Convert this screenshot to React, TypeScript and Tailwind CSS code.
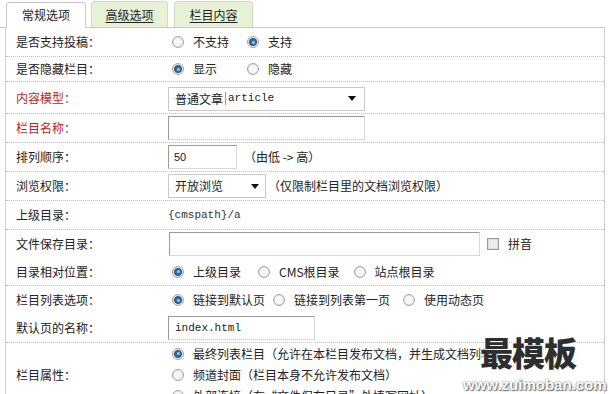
import React from "react";

function Radio({ on }: { on?: boolean }) {
  return (
    <span className="inline-flex items-center justify-center w-[12px] h-[12px] rounded-full border border-[#a8a8a8] bg-[#e4e4e4] shrink-0">
      {on ? (
        <span className="w-[8px] h-[8px] rounded-full bg-[#2f6fa8] border border-[#1d4f7e] flex items-center justify-center">
          <span className="w-[3px] h-[3px] rounded-full bg-[#9cc8ee]" />
        </span>
      ) : (
        <span className="w-[8px] h-[8px] rounded-full bg-[#f7f7f7]" />
      )}
    </span>
  );
}

function Opt({ on, label, gap }: { on?: boolean; label: string; gap?: string }) {
  return (
    <span className={`inline-flex items-center ${gap ?? ""}`}>
      <Radio on={on} />
      <span className="ml-[9px]">{label}</span>
    </span>
  );
}

function Arrow() {
  return (
    <svg width="8" height="5" viewBox="0 0 8 5" className="shrink-0">
      <path d="M0 0 H8 L4 5 Z" fill="#111" />
    </svg>
  );
}

const inputCls =
  "h-[24px] border border-t-[#9a9a9a] border-l-[#9a9a9a] border-r-[#d8d8d8] border-b-[#d8d8d8] bg-white";

export default function App() {
  return (
    <div className="w-[611px] h-[394px] bg-white relative overflow-hidden text-[12px] leading-none text-[#222] font-['Noto_Sans_CJK_SC',sans-serif]">
      {/* tabs */}
      <div className="h-[28px] flex items-end border-b border-[#c8c8c8] mr-[6px] pl-[6px]">
        <div className="w-[80px] h-[26px] -mb-px bg-white border border-[#c8c8c8] border-b-white rounded-t-[4px] flex items-center justify-center text-[#222]">
          常规选项
        </div>
        <div className="ml-[5px] w-[77px] h-[26px] bg-[#e6f1d6] border border-[#cfdcbf] border-b-0 rounded-t-[4px] flex items-center justify-center underline underline-offset-2 text-[#222]">
          高级选项
        </div>
        <div className="ml-[6px] w-[79px] h-[26px] bg-[#e6f1d6] border border-[#cfdcbf] border-b-0 rounded-t-[4px] flex items-center justify-center underline underline-offset-2 text-[#222]">
          栏目内容
        </div>
      </div>

      {/* form body */}
      <div className="ml-[5px] mr-[6px] border-l border-r border-[#d0d0d0] h-[366px]">
        {/* row 1 */}
        <div className="h-[29px] flex items-center border-b border-dotted border-[#bdbdbd]">
          <div className="w-[162px] pl-[10px] shrink-0">是否支持投稿：</div>
          <div className="flex items-center pl-[4px]">
            <Opt label="不支持" />
            <Opt on label="支持" gap="ml-[18px]" />
          </div>
        </div>
        {/* row 2 */}
        <div className="h-[25px] flex items-center border-b border-dotted border-[#bdbdbd]">
          <div className="w-[162px] pl-[10px] shrink-0">是否隐藏栏目：</div>
          <div className="flex items-center pl-[4px]">
            <Opt on label="显示" />
            <Opt label="隐藏" gap="ml-[30px]" />
          </div>
        </div>
        {/* row 3 */}
        <div className="h-[32px] flex items-center border-b border-dotted border-[#bdbdbd]">
          <div className="w-[162px] pl-[10px] shrink-0 text-[#c0221f]">内容模型：</div>
          <div className="w-[197px] h-[24px] border border-[#c9c9c9] bg-white flex items-center pl-[6px] pr-[8px] mt-[2px]">
            <span>普通文章</span>
            <span className="w-px h-[13px] bg-[#999] mx-[2px]" />
            <span className="font-['Liberation_Mono',monospace] text-[11px]">article</span>
            <span className="flex-1" />
            <Arrow />
          </div>
        </div>
        {/* row 4 */}
        <div className="h-[29px] flex items-center border-b border-dotted border-[#bdbdbd]">
          <div className="w-[162px] pl-[10px] shrink-0 text-[#c0221f]">栏目名称：</div>
          <div className={`w-[197px] ${inputCls}`} />
        </div>
        {/* row 5 */}
        <div className="h-[29px] flex items-center border-b border-dotted border-[#bdbdbd]">
          <div className="w-[162px] pl-[10px] shrink-0">排列顺序：</div>
          <div className={`w-[69px] ${inputCls} flex items-center pl-[5px] font-['Liberation_Sans',sans-serif] text-[11px]`}>50</div>
          <span className="ml-[7px]">（由低 -&gt; 高）</span>
        </div>
        {/* row 6 */}
        <div className="h-[29px] flex items-center border-b border-dotted border-[#bdbdbd]">
          <div className="w-[162px] pl-[10px] shrink-0">浏览权限：</div>
          <div className="w-[98px] h-[24px] border border-[#c9c9c9] bg-white flex items-center pl-[6px] pr-[6px]">
            <span>开放浏览</span>
            <span className="flex-1" />
            <Arrow />
          </div>
          <span className="ml-[2px]">（仅限制栏目里的文档浏览权限）</span>
        </div>
        {/* row 7 */}
        <div className="h-[29px] flex items-center border-b border-dotted border-[#bdbdbd]">
          <div className="w-[162px] pl-[10px] shrink-0">上级目录：</div>
          <span className="font-['Liberation_Mono',monospace] text-[11px] text-[#333]">{"{cmspath}/a"}</span>
        </div>
        {/* row 8 */}
        <div className="h-[28px] flex items-center">
          <div className="w-[162px] pl-[10px] shrink-0">文件保存目录：</div>
          <div className={`w-[311px] ml-[1px] ${inputCls}`} />
          <span className="ml-[7px] w-[12px] h-[12px] border border-[#9c9c9c] bg-[#dcdcdc] flex items-center justify-center">
            <span className="w-[8px] h-[8px] bg-[#ececec]" />
          </span>
          <span className="ml-[9px]">拼音</span>
        </div>
        {/* row 9 */}
        <div className="h-[28px] flex items-center border-b border-dotted border-[#bdbdbd]">
          <div className="w-[162px] pl-[10px] shrink-0">目录相对位置：</div>
          <div className="flex items-center pl-[4px]">
            <Opt on label="上级目录" />
            <Opt label="CMS根目录" gap="ml-[17px]" />
            <Opt label="站点根目录" gap="ml-[14px]" />
          </div>
        </div>
        {/* row 10 */}
        <div className="h-[28px] flex items-center">
          <div className="w-[162px] pl-[10px] shrink-0">栏目列表选项：</div>
          <div className="flex items-center pl-[4px]">
            <Opt on label="链接到默认页" />
            <Opt label="链接到列表第一页" gap="ml-[8px]" />
            <Opt label="使用动态页" gap="ml-[13px]" />
          </div>
        </div>
        {/* row 11 */}
        <div className="h-[29px] flex items-center border-b border-dotted border-[#bdbdbd]">
          <div className="w-[162px] pl-[10px] shrink-0">默认页的名称：</div>
          <div className={`w-[147px] ${inputCls} flex items-center pl-[6px] font-['Liberation_Mono',monospace] text-[11px]`}>index.html</div>
        </div>
        {/* row 12 */}
        <div className="flex items-center">
          <div className="w-[162px] pl-[10px] shrink-0">栏目属性：</div>
          <div className="flex flex-col pl-[4px]">
            <div className="h-[21px] flex items-center">
              <Opt on label="最终列表栏目（允许在本栏目发布文档，并生成文档列表）" />
            </div>
            <div className="h-[21px] flex items-center">
              <Opt label="频道封面（栏目本身不允许发布文档）" />
            </div>
            <div className="h-[21px] flex items-center">
              <Opt label="外部连接（在“文件保存目录”处填写网址）" />
            </div>
          </div>
        </div>
      </div>

      {/* watermark */}
      <div className="absolute left-[480px] top-[336px] text-[33px] leading-none font-black text-[#2e2e2e] tracking-[-1px] font-['Noto_Sans_CJK_SC',serif] [text-shadow:0_0_2px_#fff,0_0_3px_#fff]">
        最模板
      </div>
      <div className="absolute left-[463px] top-[377px] text-[15px] leading-none font-bold text-white font-['Liberation_Sans',sans-serif] [text-shadow:0_0_2px_#555,1px_1px_1px_#777]">
        www.zuimoban.com
      </div>
    </div>
  );
}
